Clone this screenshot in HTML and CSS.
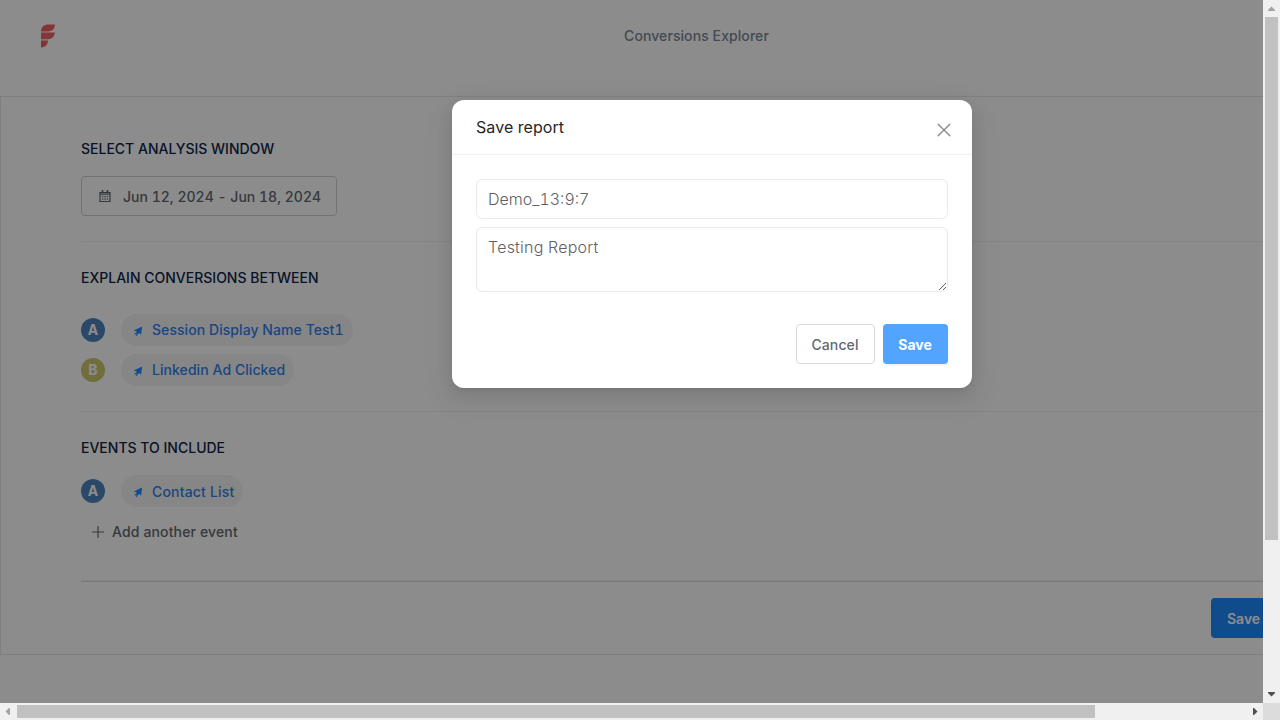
FILE: index.html
```html
<!DOCTYPE html>
<html lang="en">
<head>
<meta charset="utf-8">
<title>Conversions Explorer</title>
<link rel="stylesheet" href="styles.css">
</head>
<body>
<div class="window">
  <div class="viewport">
    <header class="topbar">
      <svg class="logo" width="14" height="24" viewBox="0 0 14.400 24">
        <path fill="#f06064" d="M0 7.300V6.500C.4 2.500 3.500.3 7.500.3H14.300C14.300 4.500 11.500 7.300 7.500 7.300Z"/>
        <path fill="#ee6468" d="M0 8.500H14.300C14 12.500 11.500 15.300 7 15.300H0Z"/>
        <path fill="#ee6060" d="M0 16.500H7.200C7.200 20.500 4.500 23.700 0 23.700Z"/>
      </svg>
      <div class="page-title">Conversions Explorer</div>
    </header>
    <main class="card">
      <section class="section window-section">
        <h2>SELECT ANALYSIS WINDOW</h2>
        <div class="date-button">
          <svg width="12" height="13" viewBox="0 0 12 13" fill="none" stroke="#606468">
            <path d="M1 2.500H11V11.500H1ZM1 4.200H11" stroke-width="1.200"/>
            <path d="M3.500 0V3M8.500 0V3" stroke-width="1.600"/>
            <path d="M3 6.700H4.300M5.400 6.700H6.700M7.800 6.700H9.100M3 9.200H4.300M5.400 9.200H6.700M7.800 9.200H9.100" stroke-width="1.300"/>
          </svg>
          <span>Jun 12, 2024 - Jun 18, 2024</span>
        </div>
      </section>
      <section class="section between-section">
        <h2>EXPLAIN CONVERSIONS BETWEEN</h2>
        <div class="event-row">
          <span class="badge badge-a">A</span>
          <span class="pill"><svg class="cursor" width="10" height="11" viewBox="0 0 10 11"><path d="M9.200 .6L8 8.800 6.300 6.800 3.300 10.300 2.700 9.600 4.500 6.700 2 8.800 1.300 8.100 4 5.500 .8 4.600Z"/></svg><b>Session Display Name Test1</b></span>
        </div>
        <div class="event-row">
          <span class="badge badge-b">B</span>
          <span class="pill"><svg class="cursor" width="10" height="11" viewBox="0 0 10 11"><path d="M9.200 .6L8 8.800 6.300 6.800 3.300 10.300 2.700 9.600 4.500 6.700 2 8.800 1.300 8.100 4 5.500 .8 4.600Z"/></svg><b>Linkedin Ad Clicked</b></span>
        </div>
      </section>
      <section class="section include-section">
        <h2>EVENTS TO INCLUDE</h2>
        <div class="event-row">
          <span class="badge badge-a">A</span>
          <span class="pill pill-contact"><svg class="cursor" width="10" height="11" viewBox="0 0 10 11"><path d="M9.200 .6L8 8.800 6.300 6.800 3.300 10.300 2.700 9.600 4.500 6.700 2 8.800 1.300 8.100 4 5.500 .8 4.600Z"/></svg><b>Contact List</b></span>
        </div>
        <div class="add-event">
          <svg width="12" height="12" viewBox="0 0 12 12" stroke="#63686f" stroke-width="1.200"><path d="M6 0V12M0 6H12"/></svg>
          <span>Add another event</span>
        </div>
      </section>
      <div class="card-footer"><div class="save-main">Save</div></div>
    </main>
    <div class="mask">
      <div class="modal">
        <div class="modal-head">
          <span class="modal-title">Save report</span>
          <svg class="close" width="14" height="14" viewBox="0 0 14 14" stroke="#8a8a8a" stroke-width="1.400" stroke-linecap="round"><path d="M1.200 1.200L12.800 12.800M12.800 1.200L1.200 12.800"/></svg>
        </div>
        <div class="modal-body">
          <input class="field name-field" type="text" value="Demo_13:9:7">
          <textarea class="field area">Testing Report</textarea>
        </div>
        <div class="modal-actions">
          <button class="btn cancel"><span>Cancel</span></button>
          <button class="btn save"><span>Save</span></button>
        </div>
      </div>
    </div>
  </div>
  <div class="bar bar-v">
    <svg class="arrow" width="17" height="17" viewBox="0 0 17 17"><path fill="#a3a3a3" d="M5 11V10L8.500 6.500 12 10V11Z"/></svg>
    <div class="thumb-v"></div>
    <svg class="arrow arrow-end" width="17" height="17" viewBox="0 0 17 17"><path fill="#505050" d="M5 7V6H12V7L8.500 10.500Z"/></svg>
  </div>
  <div class="bar bar-h">
    <svg class="arrow" width="17" height="17" viewBox="0 0 17 17"><path fill="#a3a3a3" d="M10 5V12H9L5.500 8.500 9 5Z"/></svg>
    <div class="thumb-h"></div>
    <svg class="arrow arrow-end" width="17" height="17" viewBox="0 0 17 17"><path fill="#505050" d="M7 5V12H8L11.500 8.500 8 5Z"/></svg>
  </div>
  <div class="corner"></div>
</div>
</body>
</html>
```
FILE: styles.css
```css
* { box-sizing: border-box; }
body { margin: 0; overflow: hidden; font-family: Inter, "Liberation Sans", sans-serif; font-size: 14px; font-variant-numeric: tabular-nums; }
.window { display: grid; grid-template-columns: 1263px 17px; grid-template-rows: 703px 17px; width: 1280px; height: 720px; }
.viewport { position: relative; overflow: hidden; background: #fff; }
.topbar { display: flex; width: 1393px; height: 96px; padding: 24px 0 0 41px; }
.page-title { flex: 1; margin-right: 55px; text-align: center; line-height: 24px; font-weight: 500; letter-spacing: .08px; color: #7c869a; }
.card { width: 1420px; height: 559px; border: 1px solid #e7e7e9; padding: 0 80px; }
.section { border-bottom: 1px solid #f3f3f5; }
h2 { margin: 0; font-size: 14px; line-height: 22px; font-weight: 500; color: #0e2647; }
.window-section { height: 145px; padding-top: 41px; }
.date-button { display: flex; align-items: center; width: 256px; height: 40px; margin-top: 16px; padding-left: 17px; gap: 12px; border: 1px solid #d2d2d5; border-radius: 4px; color: #63686f; font-weight: 500; letter-spacing: .01px; white-space: nowrap; }
.between-section { height: 170px; padding-top: 25px; }
.between-section h2 { margin-bottom: 25px; }
.event-row { display: flex; align-items: center; gap: 16px; height: 32px; margin-bottom: 8px; }
.badge { width: 24px; height: 24px; border-radius: 50%; color: #fff; text-align: center; line-height: 24px; font-weight: 700; }
.badge-a { background: #4e84bd; }
.badge-b { background: #cfc76d; }
.pill { display: flex; align-items: center; height: 32px; padding: 0 9px 0 12px; gap: 9px; border-radius: 16px; background: #f4f4f6; white-space: nowrap; }
.pill b { position: relative; top: -1px; color: #2f80ed; font-weight: 500; letter-spacing: .06px; }
.pill-contact b { top: 0; letter-spacing: .18px; }
.cursor { fill: #1e89ff; margin-top: 2px; }
.include-section { height: 170px; padding-top: 25px; border-color: #dedee1; box-shadow: inset 0 -1px #efeff1; }
.include-section h2 { margin-bottom: 16px; }
.add-event { display: flex; align-items: center; gap: 8px; height: 34px; padding-left: 11px; color: #63686f; font-weight: 500; letter-spacing: .14px; }
.add-event span { padding-bottom: 2px; }
.card-footer { display: flex; padding: 16px 0 0 1130px; }
.save-main { width: 67px; height: 40px; padding-left: 16px; border-radius: 4px; background: #1e89ff; color: #fff; font-weight: 600; line-height: 42px; }
.mask { position: absolute; inset: 0; background: rgba(0, 0, 0, .45); padding: 100px 0 0 452px; }
.modal { width: 520px; height: 288px; border-radius: 12px; background: #fff; box-shadow: 0 6px 16px rgba(0, 0, 0, .08), 0 3px 6px -4px rgba(0, 0, 0, .12), 0 9px 28px 8px rgba(0, 0, 0, .05); }
.modal-head { display: flex; justify-content: space-between; height: 55px; padding: 15px 21px 0 24px; border-bottom: 1px solid #f0f0f0; }
.modal-title { font-size: 16px; line-height: 24px; letter-spacing: .07px; color: #262626; }
.close { margin-top: 8px; }
.modal-body { display: flex; flex-direction: column; gap: 8px; padding: 24px 24px 0; }
.field { width: 472px; height: 40px; margin: 0; padding: 0 11px; border: 1px solid #e7e9ed; border-radius: 6px; outline: none; background: #fff; color: #5f6166; font-family: Inter, "Liberation Sans", sans-serif; font-size: 16px; font-weight: 300; letter-spacing: .22px; font-variant-numeric: tabular-nums; }
.name-field { letter-spacing: 0; }
.area { display: block; height: 65px; padding-top: 7px; line-height: 25px; }
.modal-actions { display: flex; justify-content: flex-end; gap: 8px; padding: 32px 24px 0; }
.btn { height: 40px; padding: 1px 0 0; border-radius: 4px; font: 500 14px Inter, "Liberation Sans", sans-serif; }
.cancel { width: 79px; padding-right: 1px; border: 1px solid #d9d9d9; background: #fff; color: #63686f; letter-spacing: .1px; }
.save { width: 65px; padding-right: 1px; border: 0; background: #52a4ff; color: #fff; font-weight: 700; box-shadow: 0 2px 0 rgba(0, 0, 0, .04); }
.bar { display: flex; background: #f0f0f0; }
.bar-v { flex-direction: column; }
.arrow { flex: none; }
.arrow-end { margin-top: auto; margin-left: auto; }
.thumb-v { width: 13px; height: 523px; margin-left: 2px; background: #c1c1c1; }
.thumb-h { width: 1078px; height: 13px; margin-top: 2px; background: #c1c1c1; }
.corner { background: #dcdcdc; }
```
